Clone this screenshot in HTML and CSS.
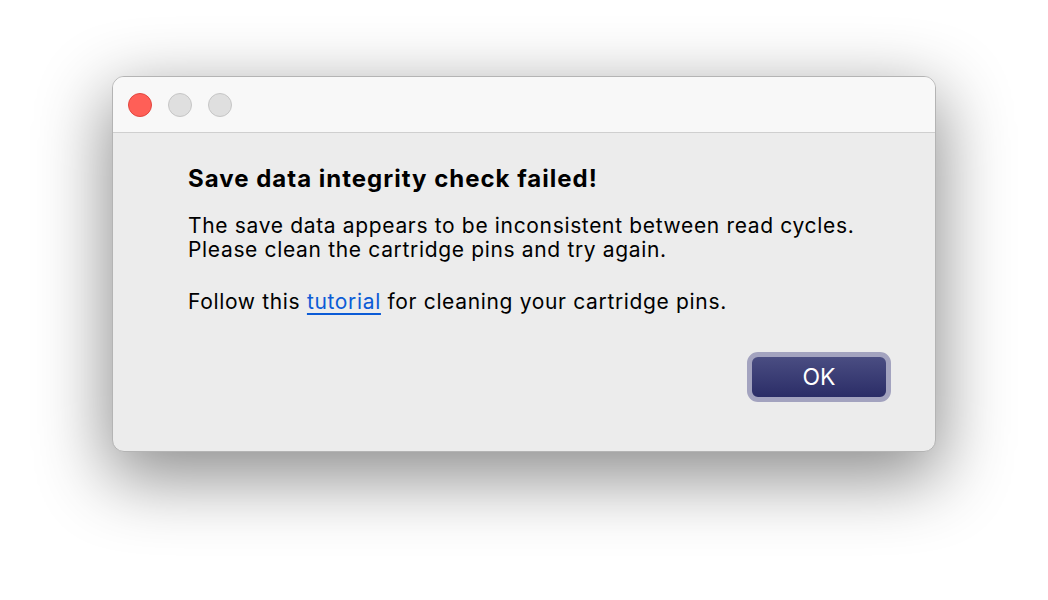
FILE: index.html
```html
<!DOCTYPE html>
<html lang="en">
<head>
  <meta charset="UTF-8">
  <title>Save data integrity check failed</title>
  <link rel="stylesheet" href="styles.css">
</head>
<body>
  <div class="window">
    <div class="titlebar">
      <span class="light close"></span>
      <span class="light"></span>
      <span class="light"></span>
    </div>
    <div class="content">
      <h1>Save data integrity check failed!</h1>
      <p>The save data appears to be inconsistent between read cycles.<br>Please clean the cartridge pins and try again.</p>
      <p>Follow this <a href="#">tutorial</a> for cleaning your cartridge pins.</p>
      <div class="actions">
        <button type="button" class="ok">OK</button>
      </div>
    </div>
  </div>
</body>
</html>
```

FILE: styles.css
```css
body {
  margin: 0;
  height: 600px;
  background: #ffffff;
  font-family: Inter, "Noto Sans", sans-serif;
  color: #000;
  display: flex;
  justify-content: center;
  align-items: flex-start;
  padding-top: 76px;
  box-sizing: border-box;
  overflow: hidden;
}

.window {
  width: 824px;
  height: 376px;
  border-radius: 12px;
  background: #ececec;
  border: 1px solid #b4b4b4;
  box-sizing: border-box;
  box-shadow: 0 22px 70px 4px rgba(0, 0, 0, 0.45);
  display: flex;
  flex-direction: column;
  overflow: hidden;
}

.titlebar {
  height: 56px;
  flex: none;
  background: #f8f8f8;
  border-bottom: 1px solid #cfcfcf;
  box-sizing: border-box;
  display: flex;
  align-items: center;
  gap: 16px;
  padding: 0 0 0 15px;
}

.light {
  width: 24px;
  height: 24px;
  border-radius: 50%;
  background: #dfdfdf;
  border: 1px solid #c6c6c6;
  box-sizing: border-box;
}
.light.close {
  background: #ff5f57;
  border-color: #e2463f;
}

.content {
  flex: 1;
  padding: 32px 44px 0 75px;
  display: flex;
  flex-direction: column;
}

h1 {
  margin: 0 0 21px;
  font-size: 24px;
  font-weight: 700;
  line-height: 28px;
  letter-spacing: 1px;
}

p {
  margin: 0 0 28px;
  font-size: 21px;
  line-height: 24px;
  letter-spacing: 0.66px;
}

a {
  color: #0b5bd6;
  text-decoration: underline;
  text-decoration-thickness: 2px;
  text-underline-offset: 4px;
}

.actions {
  display: flex;
  justify-content: flex-end;
  margin-top: 10px;
}

.ok {
  width: 144px;
  height: 50px;
  border: 5px solid #a3a3bf;
  border-radius: 11px;
  background: linear-gradient(#4a4d82, #2b2d67);
  color: #fff;
  font-family: Inter, "Noto Sans", sans-serif;
  font-size: 23px;
  cursor: pointer;
}
```
